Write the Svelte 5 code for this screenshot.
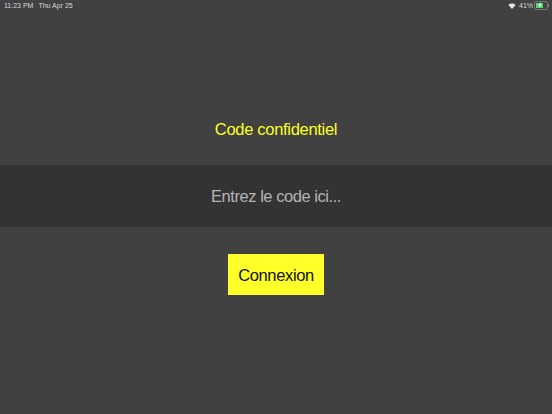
<script>
  let code = '';
</script>

<main>
  <header class="status-bar">
    <div class="left">
      <span>11:23 PM</span>
      <span>Thu Apr 25</span>
    </div>
    <div class="right">
      <svg class="wifi" width="8" height="6" viewBox="0 0 18 14">
        <path d="M9 14 L0.5 4.6 A12.5 12.5 0 0 1 17.5 4.6 Z" fill="#e6e6e6" />
      </svg>
      <span>41%</span>
      <div class="battery">
        <div class="level"></div>
        <svg class="bolt" width="4" height="6" viewBox="0 0 4 6">
          <path d="M2.4 0 L0.3 3.4 H1.8 L1.5 6 L3.7 2.5 H2.2 Z" fill="#fff" />
        </svg>
      </div>
      <div class="nub"></div>
    </div>
  </header>

  <section class="login">
    <h1>Code confidentiel</h1>
    <div class="field">
      <input type="text" bind:value={code} placeholder="Entrez le code ici..." />
    </div>
    <button>Connexion</button>
  </section>
</main>

<style>
  :global(body) {
    margin: 0;
    background: #414141;
  }

  main {
    height: 414px;
    overflow: hidden;
    background: #414141;
    font-family: "Liberation Sans", Arial, sans-serif;
  }

  .status-bar {
    display: flex;
    justify-content: space-between;
    align-items: center;
    height: 11px;
    padding: 0 3px 0 4px;
    font-size: 7px;
    line-height: 11px;
    color: #d8d8d8;
  }

  .left {
    display: flex;
    gap: 5px;
  }

  .right {
    display: flex;
    align-items: center;
    gap: 1px;
  }

  .wifi {
    margin-right: 2px;
  }

  .battery {
    position: relative;
    width: 10px;
    height: 5px;
    padding: 1px;
    border: 1px solid #777;
    border-radius: 2px;
  }

  .level {
    width: 65%;
    height: 100%;
    background: #4cd964;
  }

  .bolt {
    position: absolute;
    left: 3px;
    top: 0;
  }

  .nub {
    width: 1px;
    height: 3px;
    margin-left: -1px;
    background: #777;
  }

  .login {
    display: flex;
    flex-direction: column;
    align-items: center;
    padding-top: 108px;
  }

  h1 {
    margin: 0 0 26px;
    height: 20px;
    font-size: 16.5px;
    font-weight: 400;
    line-height: 20px;
    letter-spacing: -0.3px;
    color: #ffff1f;
  }

  .field {
    align-self: stretch;
    height: 62px;
    display: flex;
    background: #333333;
  }

  input {
    flex: 1;
    border: none;
    outline: none;
    padding: 0;
    background: transparent;
    font-family: inherit;
    font-size: 16.5px;
    letter-spacing: -0.45px;
    text-align: center;
    color: #ccc;
  }

  input::placeholder {
    color: #b4b4b4;
    opacity: 1;
  }

  button {
    margin-top: 27px;
    width: 96px;
    height: 41px;
    padding: 2px 0 0;
    border: none;
    background: #ffff2a;
    font-family: inherit;
    font-size: 16.5px;
    letter-spacing: -0.35px;
    color: #111;
  }
</style>
